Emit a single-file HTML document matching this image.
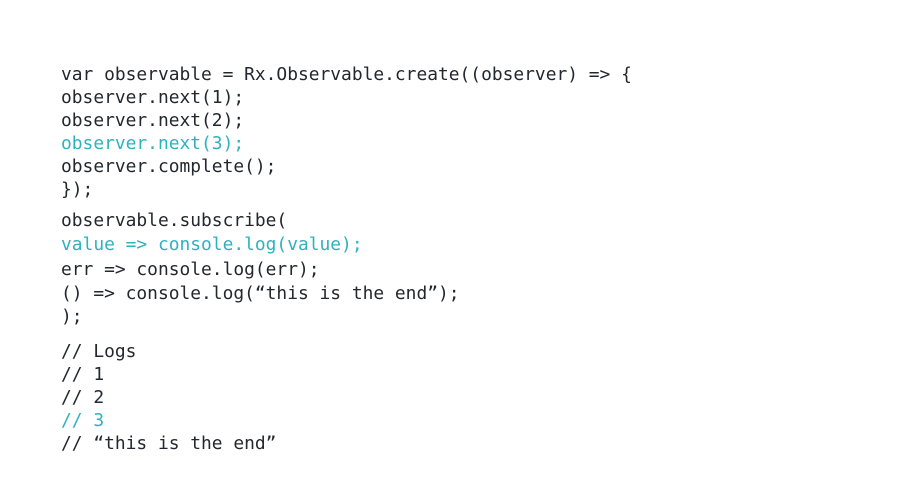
<!DOCTYPE html>
<html><head><style>
body{margin:0;width:904px;height:485px;background:#fff;overflow:hidden;position:relative}
.l{position:absolute;left:61px;font-family:"DejaVu Sans Mono","Liberation Mono",monospace;font-size:17.9px;line-height:23px;height:23px;color:#23282e;white-space:pre}
.c{color:#2fb1bf}
</style></head><body>
<div class="l" style="top:63px">var observable = Rx.Observable.create((observer) =&gt; {</div>
<div class="l" style="top:86px">observer.next(1);</div>
<div class="l" style="top:109px">observer.next(2);</div>
<div class="l c" style="top:132px">observer.next(3);</div>
<div class="l" style="top:155px">observer.complete();</div>
<div class="l" style="top:178px">});</div>
<div class="l" style="top:209px">observable.subscribe(</div>
<div class="l c" style="top:233px">value =&gt; console.log(value);</div>
<div class="l" style="top:258px">err =&gt; console.log(err);</div>
<div class="l" style="top:282px">() =&gt; console.log(“this is the end”);</div>
<div class="l" style="top:305px">);</div>
<div class="l" style="top:340px">// Logs</div>
<div class="l" style="top:363px">// 1</div>
<div class="l" style="top:386px">// 2</div>
<div class="l c" style="top:409px">// 3</div>
<div class="l" style="top:432px">// “this is the end”</div>
</body></html>
